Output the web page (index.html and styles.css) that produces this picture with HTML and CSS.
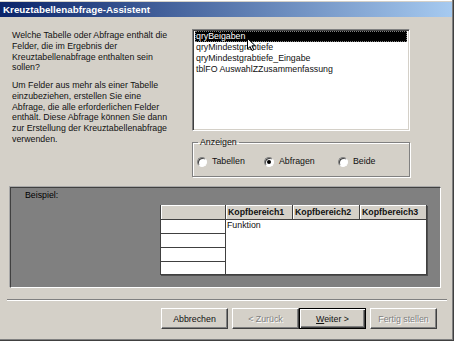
FILE: index.html
```html
<!DOCTYPE html>
<html lang="de">
<head>
<meta charset="utf-8">
<title>Kreuztabellenabfrage-Assistent</title>
<link rel="stylesheet" href="styles.css">
</head>
<body>
<div class="window">
  <div class="titlebar">Kreuztabellenabfrage-Assistent</div>
  <div class="content">
    <div class="top">
      <div class="intro">
        <p>Welche Tabelle oder Abfrage enthält die<br>Felder, die im Ergebnis der<br>Kreuztabellenabfrage enthalten sein<br>sollen?</p>
        <p>Um Felder aus mehr als einer Tabelle<br>einzubeziehen, erstellen Sie eine<br>Abfrage, die alle erforderlichen Felder<br>enthält. Diese Abfrage können Sie dann<br>zur Erstellung der Kreuztabellenabfrage<br>verwenden.</p>
      </div>
      <div class="side">
        <div class="listbox">
          <div class="item selected">qryBeigaben</div>
          <div class="item">qryMindestgrabtiefe</div>
          <div class="item">qryMindestgrabtiefe_Eingabe</div>
          <div class="item">tblFO AuswahlZZusammenfassung</div>
          <svg class="cursor" width="10" height="14" viewBox="0 0 10 14"><path d="M0.5 0.5 L0.5 11 L3 8.5 L5 12.5 L6.8 11.7 L4.9 7.8 L8.3 7.8 Z" fill="#fff" stroke="#000" stroke-width="1"/></svg>
        </div>
        <fieldset class="group">
          <legend>Anzeigen</legend>
          <div class="options">
            <label class="opt opt-1"><span class="radio"></span>Tabellen</label>
            <label class="opt opt-2"><span class="radio checked"></span>Abfragen</label>
            <label class="opt"><span class="radio"></span>Beide</label>
          </div>
        </fieldset>
      </div>
    </div>
    <div class="sample">
      <div class="sample-label">Beispiel:</div>
      <div class="grid">
        <div class="corner"></div>
        <div class="hdr">Kopfbereich1</div>
        <div class="hdr">Kopfbereich2</div>
        <div class="hdr">Kopfbereich3</div>
        <div class="rowhdr r1"></div>
        <div class="rowhdr r2"></div>
        <div class="rowhdr r3"></div>
        <div class="rowhdr r4"></div>
        <div class="data">Funktion</div>
      </div>
    </div>
    <div class="separator"></div>
    <div class="buttons">
      <button class="btn">Abbrechen</button>
      <button class="btn disabled">&lt; Zurück</button>
      <button class="btn default"><u>W</u>eiter &gt;</button>
      <button class="btn disabled">Fertig stellen</button>
    </div>
  </div>
</div>
</body>
</html>
```
FILE: styles.css
```css
html, body {
  margin: 0;
  padding: 0;
  background: #d4d0c8;
}
.window {
  width: 454px;
  height: 341px;
  box-sizing: border-box;
  padding: 2px 2px 2px 0;
  background: #d4d0c8;
  box-shadow: inset -1px -1px 0 #404040, inset -2px -2px 0 #808080, inset 0 1px 0 #fff;
  font-family: "Liberation Sans", Arial, sans-serif;
  font-size: 8.8px;
  color: #111;
  display: flex;
  flex-direction: column;
}
.titlebar {
  height: 15px;
  line-height: 15px;
  padding-left: 3px;
  background: linear-gradient(to right, #0a246a 0%, #a6caf0 100%);
  color: #fff;
  font-weight: bold;
  font-size: 9.8px;
  flex: none;
}
.content {
  flex: 1;
  display: flex;
  flex-direction: column;
}
.top {
  display: flex;
  margin-top: 12px;
}
.intro {
  width: 180px;
  padding-left: 12px;
  padding-top: 1px;
  white-space: nowrap;
  line-height: 10.8px;
}
.intro p {
  margin: 0 0 6.8px 0;
}
.side {
  width: 218px;
  display: flex;
  flex-direction: column;
}
.listbox {
  position: relative;
  height: 102px;
  box-sizing: border-box;
  background: #fff;
  border: 1px solid;
  border-color: #808080 #fff #fff #808080;
  box-shadow: inset 1px 1px 0 #404040, inset -1px -1px 0 #d4d0c8;
  padding: 1px 2px;
}
.item {
  line-height: 11px;
  height: 11px;
  padding-left: 1px;
  white-space: nowrap;
}
.item.selected {
  background: #000;
  color: #fff;
  outline: 1px dotted #808080;
  outline-offset: -1px;
}
.cursor {
  position: absolute;
  left: 54px;
  top: 8px;
}
.group {
  margin: 6px 0 0 0;
  padding: 8px 4px 9px 4px;
  border: 1px solid #808080;
  box-shadow: 1px 1px 0 #fff, inset 1px 1px 0 #fff;
  min-width: 0;
}
.group legend {
  padding: 0 2px;
  line-height: 11px;
  margin-left: 1px;
}
.options {
  display: flex;
  line-height: 11px;
}
.opt {
  display: flex;
  align-items: center;
  gap: 5px;
}
.opt-1 { width: 67px; }
.opt-2 { width: 74px; }
.radio {
  width: 10px;
  height: 10px;
  box-sizing: border-box;
  border-radius: 50%;
  background: #fff;
  border: 1px solid;
  border-color: #808080 #fff #fff #808080;
  box-shadow: inset 1px 1px 0 #404040;
  display: flex;
  align-items: center;
  justify-content: center;
}
.radio.checked::after {
  content: "";
  width: 4px;
  height: 4px;
  border-radius: 50%;
  background: #000;
}
.sample {
  margin: 10px 11px 0 10px;
  height: 101px;
  box-sizing: border-box;
  background: #808080;
  border: 1px solid;
  border-color: #404040 #fff #fff #404040;
  box-shadow: -1px -1px 0 #a8a8a8;
  display: flex;
  flex-direction: column;
}
.sample-label {
  padding: 2px 0 0 14px;
  line-height: 11px;
  color: #000;
}
.grid {
  align-self: flex-end;
  margin: 4px 13px 0 0;
  display: grid;
  grid-template-columns: 64px 66px 66px 66px;
  grid-template-rows: 14px 13px 13px 13px 12px;
  gap: 1px;
  padding: 0 1px 1px 1px;
  background: #404040;
  box-shadow: 1px 1px 0 #505050;
}
.corner, .hdr {
  background: #d4d0c8;
  box-shadow: inset 1px 1px 0 #fff;
}
.hdr {
  font-weight: bold;
  line-height: 14px;
  padding-left: 2px;
  white-space: nowrap;
  overflow: hidden;
}
.rowhdr {
  background: #fff;
  grid-column: 1;
}
.r1 { grid-row: 2; }
.r2 { grid-row: 3; }
.r3 { grid-row: 4; }
.r4 { grid-row: 5; }
.data {
  grid-column: 2 / 5;
  grid-row: 2 / 6;
  background: #fff;
  line-height: 11px;
  padding-left: 1px;
}
.separator {
  margin: 11px 5px 0 7px;
  height: 1px;
  background: #808080;
  border-bottom: 1px solid #fff;
}
.buttons {
  display: flex;
  justify-content: flex-end;
  margin-top: 7px;
  padding-right: 15px;
}
.btn {
  width: 67px;
  height: 21px;
  box-sizing: border-box;
  margin: 0 0 0 4px;
  padding: 0;
  background: #d4d0c8;
  border: 1px solid;
  border-color: #fff #404040 #404040 #fff;
  box-shadow: inset -1px -1px 0 #808080;
  font-family: "Liberation Sans", Arial, sans-serif;
  font-size: 8.8px;
  color: #111;
}
.btn.default {
  margin-left: 0;
  border: 1px solid #000;
  box-shadow: inset 1px 1px 0 #fff, inset -1px -1px 0 #404040, inset -2px -2px 0 #808080;
}
.btn.disabled {
  color: #808080;
  text-shadow: 1px 1px 0 #fff;
}
```
